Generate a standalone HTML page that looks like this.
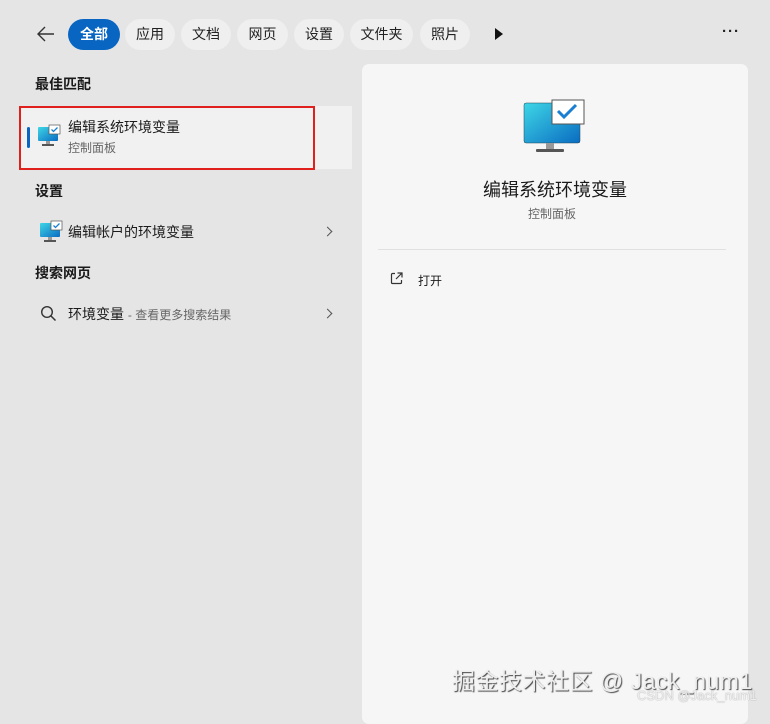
<!DOCTYPE html>
<html><head><meta charset="utf-8"><style>
*{margin:0;padding:0;box-sizing:border-box}
body{width:770px;height:711px;background:#e5e5e5;font-family:"Liberation Sans","Noto Sans CJK SC",sans-serif;color:#1b1b1b;position:relative;overflow:hidden}
.abs{position:absolute}
.chip{position:absolute;top:19px;height:31px;border-radius:16px;background:#efefef;font-size:14px;line-height:31px;text-align:center;color:#222}
.h{position:absolute;left:35px;font-size:14px;font-weight:bold;color:#1a1a1a}
.t{font-size:14px;color:#1b1b1b}
.s{font-size:12px;color:#666}
.chev{position:absolute;left:324px;width:7px;height:7px;border-right:1.5px solid #555;border-top:1.5px solid #555;transform:rotate(45deg)}
</style></head><body>
<svg class="abs" style="left:36px;top:25px" width="20" height="18" viewBox="0 0 20 18"><path d="M18 9H2M9 2L2 9l7 7" fill="none" stroke="#333" stroke-width="1.4"/></svg>
<div class="chip" style="left:68px;width:52px;background:#0866c2;color:#fff;font-weight:bold">全部</div>
<div class="chip" style="left:125px;width:50px">应用</div>
<div class="chip" style="left:181px;width:50px">文档</div>
<div class="chip" style="left:237px;width:51px">网页</div>
<div class="chip" style="left:294px;width:50px">设置</div>
<div class="chip" style="left:350px;width:63px">文件夹</div>
<div class="chip" style="left:420px;width:50px">照片</div>
<svg class="abs" style="left:494px;top:28px" width="10" height="12"><path d="M1 0L9 6L1 12Z" fill="#111"/></svg>
<div class="abs" style="left:722px;top:23px;font-size:15px;font-weight:bold;letter-spacing:1px;color:#222">···</div>

<div class="h" style="top:74px">最佳匹配</div>
<div class="abs" style="left:20px;top:106px;width:332px;height:63px;background:#f1f1f1"></div>
<div class="abs" style="left:19px;top:106px;width:296px;height:64px;border:2px solid #e0201c"></div>
<div class="abs" style="left:27px;top:127px;width:3px;height:21px;background:#0866c2;border-radius:2px"></div>
<svg class="abs" style="left:37px;top:124px" width="25" height="24" viewBox="0 0 25 24"><defs><linearGradient id="g" x1="0" y1="0" x2="1" y2="1"><stop offset="0" stop-color="#3ed6e6"/><stop offset="1" stop-color="#0a6cc2"/></linearGradient></defs><rect x="1" y="3" width="20" height="14" rx="1" fill="url(#g)"/><rect x="9" y="17" width="4" height="3" fill="#999"/><rect x="5" y="20" width="12" height="2" fill="#555"/><rect x="12" y="1" width="11" height="9" fill="#fff" stroke="#555" stroke-width=".7"/><path d="M14.5 5.5l2 2 4-4" stroke="#1a7fd3" stroke-width="1.3" fill="none"/></svg>
<div class="abs t" style="left:68px;top:117px">编辑系统环境变量</div>
<div class="abs s" style="left:68px;top:139px">控制面板</div>

<div class="h" style="top:181px">设置</div>
<svg class="abs" style="left:39px;top:220px" width="25" height="24" viewBox="0 0 25 24"><rect x="1" y="3" width="20" height="14" rx="1" fill="url(#g)"/><rect x="9" y="17" width="4" height="3" fill="#999"/><rect x="5" y="20" width="12" height="2" fill="#555"/><rect x="12" y="1" width="11" height="9" fill="#fff" stroke="#555" stroke-width=".7"/><path d="M14.5 5.5l2 2 4-4" stroke="#1a7fd3" stroke-width="1.3" fill="none"/></svg>
<div class="abs t" style="left:68px;top:222px">编辑帐户的环境变量</div>
<div class="chev" style="top:228px"></div>

<div class="h" style="top:263px">搜索网页</div>
<svg class="abs" style="left:40px;top:305px" width="17" height="17" viewBox="0 0 17 17"><circle cx="7" cy="7" r="5.3" fill="none" stroke="#333" stroke-width="1.4"/><path d="M11 11l4.5 4.5" stroke="#333" stroke-width="1.5"/></svg>
<div class="abs t" style="left:68px;top:304px">环境变量 <span style="font-size:12px;color:#666">- 查看更多搜索结果</span></div>
<div class="chev" style="top:310px"></div>

<div class="abs" style="left:362px;top:64px;width:386px;height:660px;background:#f6f6f6;border-radius:7px"></div>
<svg class="abs" style="left:522px;top:99px" width="64" height="54" viewBox="0 0 64 54"><defs><linearGradient id="g2" x1="0" y1="0" x2="1" y2="1"><stop offset="0" stop-color="#3ed6e6"/><stop offset="1" stop-color="#0a6cc2"/></linearGradient></defs><rect x="2" y="4" width="56" height="40" rx="2" fill="url(#g2)" stroke="#245" stroke-width=".5"/><rect x="24" y="44" width="8" height="6" fill="#999"/><rect x="14" y="50" width="28" height="3" rx="1" fill="#555"/><rect x="30" y="1" width="32" height="24" fill="#fff" stroke="#555" stroke-width="1"/><path d="M36 12l6 6 12-12" stroke="#1a7fd3" stroke-width="3" fill="none"/></svg>
<div class="abs" style="left:362px;top:176px;width:386px;text-align:center;font-size:18px;color:#1a1a1a">编辑系统环境变量</div>
<div class="abs" style="left:362px;top:205px;width:380px;text-align:center;font-size:12px;color:#666">控制面板</div>
<div class="abs" style="left:378px;top:249px;width:348px;height:1px;background:#e0e0e0"></div>
<svg class="abs" style="left:390px;top:272px" width="13" height="13" viewBox="0 0 13 13"><path d="M5 1.5H2.5a1 1 0 0 0-1 1v8a1 1 0 0 0 1 1h8a1 1 0 0 0 1-1V8M7.5 1h4.5v4.5M12 1L6 7" fill="none" stroke="#333" stroke-width="1.2"/></svg>
<div class="abs" style="left:418px;top:272px;font-size:12px;color:#1a1a1a">打开</div>

<div class="abs" style="left:452px;top:662px;font-size:23px;color:#eee;text-shadow:1px 1px 1px #444;letter-spacing:0.5px">掘金技术社区 @ Jack_num1</div>
<div class="abs" style="left:637px;top:688px;font-size:13px;color:#eee;text-shadow:0 0 1px #888">CSDN @Jack_num1</div>
</body></html>
